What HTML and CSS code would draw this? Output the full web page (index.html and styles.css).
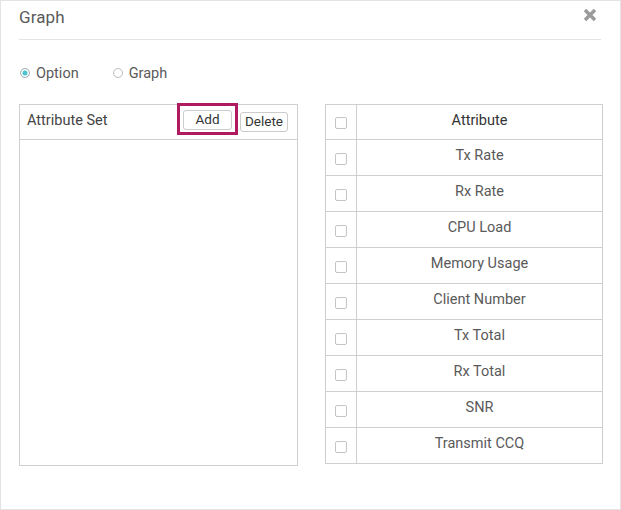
FILE: index.html
```html
<!DOCTYPE html>
<html>
<head>
<meta charset="utf-8">
<link rel="stylesheet" href="styles.css">
</head>
<body>
<div class="dialog">
  <div class="header">
    <span class="title">Graph</span>
    <span class="close">
      <svg width="14" height="14" viewBox="0 0 14 14"><path d="M2 2 L12 12 M12 2 L2 12" stroke="#9a9a9a" stroke-width="3.4" stroke-linecap="butt"/></svg>
    </span>
  </div>
  <div class="radios">
    <label class="radio"><span class="dot checked"></span>Option</label>
    <label class="radio"><span class="dot"></span>Graph</label>
  </div>
  <div class="panels">
    <div class="setpanel">
      <div class="sethead">
        <span class="setlabel">Attribute Set</span>
        <span class="btns">
          <span class="btn add">Add</span>
          <span class="btn del">Delete</span>
        </span>
        <span class="highlight"></span>
      </div>
    </div>
    <table class="attrs">
      <tr class="head"><td class="cb"><span class="box"></span></td><td>Attribute</td></tr>
      <tr><td class="cb"><span class="box"></span></td><td>Tx Rate</td></tr>
      <tr><td class="cb"><span class="box"></span></td><td>Rx Rate</td></tr>
      <tr><td class="cb"><span class="box"></span></td><td>CPU Load</td></tr>
      <tr><td class="cb"><span class="box"></span></td><td>Memory Usage</td></tr>
      <tr><td class="cb"><span class="box"></span></td><td>Client Number</td></tr>
      <tr><td class="cb"><span class="box"></span></td><td>Tx Total</td></tr>
      <tr><td class="cb"><span class="box"></span></td><td>Rx Total</td></tr>
      <tr><td class="cb"><span class="box"></span></td><td>SNR</td></tr>
      <tr><td class="cb"><span class="box"></span></td><td>Transmit CCQ</td></tr>
    </table>
  </div>
</div>
</body>
</html>
```
FILE: styles.css
```css
html, body { margin: 0; padding: 0; background: #fff; }
body { font-family: Roboto, "Noto Sans", sans-serif; color: #5a5a5a; }
.dialog {
  width: 621px; height: 510px; box-sizing: border-box;
  border: 1px solid #e3e3e3;
  padding: 0 19px 0 18px;
}
.header {
  height: 38px; border-bottom: 1px solid #e3e3e3;
  display: flex; align-items: center; justify-content: space-between;
}
.title { font-size: 17px; color: #5a5a5a; margin-top: -7px; letter-spacing: 0.1px; }
.close { display: flex; margin-top: -11px; margin-right: 4px; }
.radios { display: flex; align-items: center; height: 28px; margin-top: 19px; font-size: 14.5px; }
.radio { display: flex; align-items: center; color: #5a5a5a; }
.radio:first-child { margin-right: 33px; }
.dot {
  width: 8px; height: 8px; border-radius: 50%;
  border: 1.5px solid #bcbcbc; margin-right: 6px; box-sizing: content-box;
  background: #fff; margin-left: 1px;
}
.dot.checked { background: #4ac4cf; box-shadow: inset 0 0 0 1.5px #fff; border-color: #b5b5b5; }
.panels { display: flex; gap: 27px; margin-top: 17px; }
.setpanel {
  width: 279px; height: 362px; box-sizing: border-box; flex-shrink: 0;
  border: 1px solid #cfcfcf;
}
.sethead {
  position: relative;
  height: 34px; border-bottom: 1px solid #cfcfcf;
  display: flex; align-items: center; justify-content: space-between;
  padding-left: 7px;
}
.setlabel { font-size: 14.5px; color: #444; margin-top: -3px; }
.btns { display: flex; gap: 8px; margin-right: 9px; }
.btn {
  border: 1px solid #cccccc; border-radius: 3px; background: #fff;
  font-size: 13.5px; color: #333; height: 18px; line-height: 17px;
  text-align: center; box-sizing: content-box;
}
.add { width: 47px; margin-top: -2px; }
.del { width: 46px; margin-top: 0; }
.highlight {
  position: absolute; left: 157px; top: -2px; width: 55px; height: 26px;
  border: 3px solid #b01a5e;
}
.attrs {
  border-collapse: collapse; width: 278px; flex-shrink: 0;
  font-size: 14.5px; color: #5a5a5a;
  align-self: flex-start;
}
.attrs tr { height: 36px; }
.attrs tr.head { height: 35px; }
.attrs td { border: 1px solid #cfcfcf; padding: 0 0 3px; text-align: center; line-height: 16px; }
.attrs td.cb { width: 30px; padding: 0; }
.attrs tr.head td { color: #333; }
.box {
  display: inline-block; width: 10px; height: 10px;
  border: 1px solid #c4c4c4; border-radius: 2px; vertical-align: middle;
  margin-top: 2px;
}
```
